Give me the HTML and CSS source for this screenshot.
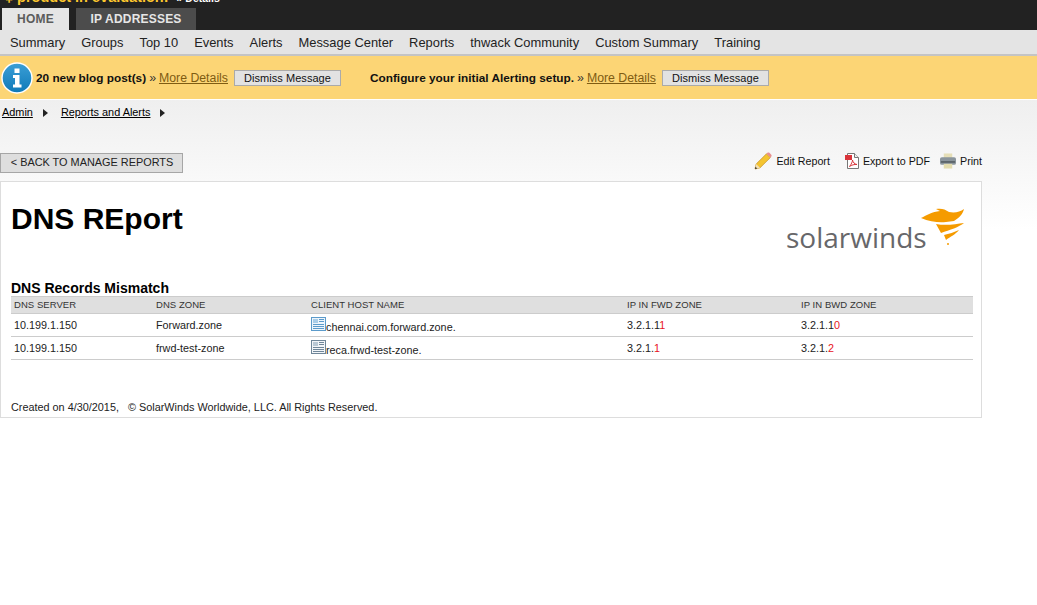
FILE: index.html
```html
<!DOCTYPE html>
<html lang="en">
<head>
  <meta charset="UTF-8">
  <meta name="viewport" content="width=device-width, initial-scale=1.0">
  <title>DNS REport</title>
  <link rel="stylesheet" href="styles.css">
</head>
<body>
  <!-- top bar -->
  <div class="topbar">
    <div class="eval"><b>‡ product in evaluation!</b><span>» Details</span></div>
    <ul class="tabs">
      <li class="on">HOME</li>
      <li>IP ADDRESSES</li>
    </ul>
  </div>

  <!-- menu -->
  <ul class="menu">
    <li>Summary</li>
    <li>Groups</li>
    <li>Top 10</li>
    <li>Events</li>
    <li>Alerts</li>
    <li>Message Center</li>
    <li>Reports</li>
    <li>thwack Community</li>
    <li>Custom Summary</li>
    <li>Training</li>
  </ul>

  <!-- notice -->
  <div class="notice">
    <svg class="info" width="32" height="32" viewBox="0 0 32 32">
      <defs>
        <linearGradient id="infoBg" x1="0" y1="0" x2="0" y2="1">
          <stop offset="0" stop-color="#3b9fd6"/>
          <stop offset="1" stop-color="#0f79b8"/>
        </linearGradient>
      </defs>
      <circle cx="16" cy="16" r="15" fill="url(#infoBg)" stroke="#fff" stroke-width="1.4"/>
      <rect x="13.5" y="6.5" width="5" height="4.5" fill="#fff"/>
      <path d="M12 13h6.500v9.500H20.500V25.500H12V22.500h2V16H12z" fill="#fff"/>
    </svg>
    <div class="msg msg1">
      <b>20 new blog post(s)</b> <i>»</i> <a>More Details</a>
      <button>Dismiss Message</button>
    </div>
    <div class="msg">
      <b>Configure your initial Alerting setup.</b> <i>»</i> <a>More Details</a>
      <button>Dismiss Message</button>
    </div>
  </div>

  <div class="page">
    <!-- breadcrumb -->
    <div class="crumb">
      <a>Admin</a><span class="arr"></span>
      <a>Reports and Alerts</a><span class="arr"></span>
    </div>

    <div class="actions">
      <button class="back">&lt; BACK TO MANAGE REPORTS</button>
      <div class="tools">
        <span class="tool">
          <svg width="18" height="18" viewBox="0 0 18 18">
            <path d="M1 17l1.200-5L12.500 1.800l3.800 3.800L6 15.800z" fill="#f4c430" stroke="#c9962a" stroke-width=".8"/>
            <path d="M12.500 1.800l1-1c.6-.5 1.300-.5 1.900 0l1.900 1.900c.5.6.5 1.300 0 1.900l-1 1z" fill="#e88f8f"/>
            <path d="M1 17l1.200-5 3.800 3.800z" fill="#f3e0b5"/>
            <path d="M1 17l.5-2.200 1.700 1.700z" fill="#222"/>
          </svg>
          Edit Report
        </span>
        <span class="tool">
          <svg width="14" height="16" viewBox="0 0 14 16">
            <path d="M2.500.5H9.500L13.500 4.500V15.500H2.500z" fill="#fff" stroke="#777"/>
            <path d="M9.500.5V4.500H13.500" fill="#eee" stroke="#777"/>
            <rect x="0" y="2" width="7" height="5" fill="#d9343a"/>
            <path d="M4.500 13.500C6.500 11 7.500 8.500 7.500 7c.5 2.500 2 4 4.500 4.500-2.500-.3-5.500.5-7.500 2z" fill="none" stroke="#d9343a" stroke-width="1"/>
          </svg>
          Export to PDF
        </span>
        <span class="tool print">
          <svg width="16" height="16" viewBox="0 0 17 16">
            <rect x="4" y="0" width="9" height="5" fill="#e6dfb8"/>
            <rect x="0" y="4" width="17" height="8" rx="2" fill="#8b959c"/>
            <rect x="1" y="8" width="15" height="2" fill="#5d666c"/>
            <rect x="4" y="11" width="9" height="5" fill="#e3dcae"/>
          </svg>
          Print
        </span>
      </div>
    </div>

    <!-- report -->
    <div class="report">
      <div class="rep-head">
        <h1>DNS REport</h1>
        <div class="logo">
          <span class="logo-txt">solarwinds</span>
          <svg class="sun" width="52" height="44" viewBox="0 0 52 44">
            <path d="M5 13C11 10 16 7 24 6L20 4C25 3 29 4 33 7 39 8 44 7 48 4 47 9 43 13 38 16L30 17C24 18 14 17 5 13z" fill="#f59b00"/>
            <path d="M20 19C30 21 40 19 48 18 43 22 34 25 25 28z" fill="#f59b00"/>
            <path d="M28 30C33 29 38 27 43 25 40 29 34 32 30 35z" fill="#f59b00"/>
            <circle cx="32" cy="39" r="1" fill="#f59b00"/>
          </svg>
        </div>
      </div>

      <h2>DNS Records Mismatch</h2>
      <table>
        <thead>
          <tr>
            <th class="c1">DNS SERVER</th>
            <th class="c2">DNS ZONE</th>
            <th class="c3">CLIENT HOST NAME</th>
            <th class="c4">IP IN FWD ZONE</th>
            <th>IP IN BWD ZONE</th>
          </tr>
        </thead>
        <tbody>
          <tr>
            <td>10.199.1.150</td>
            <td>Forward.zone</td>
            <td>
              <svg class="doc" width="15" height="14" viewBox="0 0 15 14">
                <rect x=".5" y=".5" width="14" height="13" fill="#eef5fb" stroke="#5c9bcb"/>
                <rect x="2" y="2" width="5" height="4" fill="#a9cde8"/>
                <path d="M8 2.500h5M8 4.500h5M2 7.500h11M2 9.500h11M2 11.500h11" stroke="#5c9bcb"/>
              </svg>chennai.com.forward.zone.
            </td>
            <td>3.2.1.1<em>1</em></td>
            <td>3.2.1.1<em>0</em></td>
          </tr>
          <tr>
            <td>10.199.1.150</td>
            <td>frwd-test-zone</td>
            <td>
              <svg class="doc" width="15" height="14" viewBox="0 0 15 14">
                <rect x=".5" y=".5" width="14" height="13" fill="#f2f5f8" stroke="#6f8699"/>
                <rect x="2" y="2" width="5" height="4" fill="#b9c8d4"/>
                <path d="M8 2.500h5M8 4.500h5M2 7.500h11M2 9.500h11M2 11.500h11" stroke="#6f8699"/>
              </svg>reca.frwd-test-zone.
            </td>
            <td>3.2.1.<em>1</em></td>
            <td>3.2.1.<em>2</em></td>
          </tr>
        </tbody>
      </table>

      <p class="foot">Created on 4/30/2015, &nbsp; © SolarWinds Worldwide, LLC. All Rights Reserved.</p>
    </div>
  </div>
</body>
</html>
```

FILE: styles.css
```css
html, body{
  margin: 0;
  padding: 0;
  background: #fff;
  font-family: "Liberation Sans", Arial, sans-serif;
  color: #000;
}
ul{
  margin: 0;
  padding: 0;
  list-style: none;
}

/* top bar */
.topbar{
  height: 30px;
  background: #222;
  overflow: hidden;
}
.eval{
  display: flex;
  gap: 8px;
  height: 18px;
  margin-top: -10px;
  padding-left: 5px;
  font-size: 14.500px;
  line-height: 14px;
  color: #fff;
}
.eval b{
  color: #fdc72e;
}
.eval span{
  font-size: 10.500px;
  line-height: 16px;
  font-weight: bold;
}
.tabs{
  display: flex;
  gap: 7px;
  padding-left: 2px;
}
.tabs li{
  width: 120px;
  height: 22px;
  background: #4c4c4c;
  color: #e6e6e6;
  font: bold 12px/22px "Liberation Sans", Arial, sans-serif;
  letter-spacing: .2px;
  text-align: center;
}
.tabs li.on{
  width: 67px;
  background: #e5e5e5;
  color: #5c5c5c;
}

/* menu */
.menu{
  display: flex;
  gap: 16px;
  height: 24px;
  padding-left: 10px;
  background: #e4e4e4;
  border-bottom: 2px solid #c4c4c4;
  font-size: 12.900px;
  line-height: 25px;
  color: #222;
}

/* notice */
.notice{
  display: flex;
  align-items: center;
  height: 43px;
  background: #fcd575;
  border-bottom: 1px solid #fff;
  padding-left: 1px;
  font-size: 12.300px;
}
.info{
  flex-shrink: 0;
}
.msg{
  display: flex;
  align-items: center;
  gap: 3px;
}
.msg1{
  width: 334px;
  padding-left: 3px;
  flex-shrink: 0;
}
.msg b{
  font-size: 11.800px;
  color: #111;
}
.msg i{
  font-style: normal;
  color: #333;
}
.msg a{
  color: #7f5c12;
  text-decoration: underline;
}
.msg button{
  margin-left: 3px;
}
button{
  height: 16px;
  padding: 0 9px;
  background: #e2e2e2;
  border: 1px solid #aaa;
  font: 11px/14px "Liberation Sans", Arial, sans-serif;
  letter-spacing: .05px;
  color: #111;
}

/* page */
.page{
  background: linear-gradient(#efefef, #fff 130px);
  background-repeat: no-repeat;
  padding-bottom: 188px;
}
.crumb{
  display: flex;
  align-items: center;
  height: 24px;
  padding: 0 0 2px 2px;
  font-size: 10.900px;
}
.crumb a{
  text-decoration: underline;
}
.arr{
  width: 0;
  height: 0;
  margin: 2px 13px 0 10px;
  border-left: 5px solid #222;
  border-top: 4px solid transparent;
  border-bottom: 4px solid transparent;
}
.actions{
  display: flex;
  justify-content: space-between;
  align-items: center;
  width: 982px;
  margin-top: 27px;
}
.back{
  width: 183px;
  height: 20px;
  padding: 0 0 2px 1px;
  border: 1px solid #a6a6a6;
  background: #dedede;
  font-size: 10.900px;
  letter-spacing: 0;
  color: #222;
  text-align: center;
}
.tools{
  display: flex;
  gap: 15px;
  margin-top: -5px;
}
.tool{
  display: flex;
  align-items: center;
  gap: 4px;
  font-size: 10.700px;
  color: #111;
}
.tool.print{
  margin-left: -5px;
}

/* report box */
.report{
  box-sizing: border-box;
  width: 982px;
  height: 237px;
  margin-top: 8px;
  padding: 0 8px 0 10px;
  background: #fff;
  border: 1px solid #ddd;
}
.rep-head{
  display: flex;
  justify-content: space-between;
  height: 98px;
}
h1{
  margin: 20px 0 0;
  font-size: 30px;
  line-height: 34px;
  font-weight: bold;
}
.logo{
  position: relative;
  width: 187px;
  height: 70px;
}
.logo-txt{
  position: absolute;
  left: 0;
  top: 37px;
  font: 500 28px/36px "Open Sans", sans-serif;
  color: #67676a;
}
.sun{
  position: absolute;
  left: 130px;
  top: 23px;
}
h2{
  margin: 0;
  font-size: 14px;
  line-height: 16px;
  font-weight: bold;
}
table{
  width: 962px;
  border-collapse: collapse;
  table-layout: fixed;
  font-size: 10.800px;
}
th{
  height: 15px;
  padding: 0 0 1px 3px;
  background: #dfdfdf;
  border-top: 1px solid #ccc;
  border-bottom: 1px solid #ccc;
  font-size: 9.500px;
  font-weight: normal;
  text-align: left;
  letter-spacing: .05px;
  color: #333;
}
.c1{ width: 139px; }
.c2{ width: 152px; }
.c3{ width: 313px; }
.c4{ width: 171px; }
td{
  height: 22px;
  padding: 0 0 0 3px;
  border-bottom: 1px solid #ccc;
  color: #222;
}
em{
  font-style: normal;
  color: #e8121c;
}
.foot{
  margin: 41px 0 0;
  font-size: 10.850px;
  line-height: 13px;
  color: #222;
}
```
